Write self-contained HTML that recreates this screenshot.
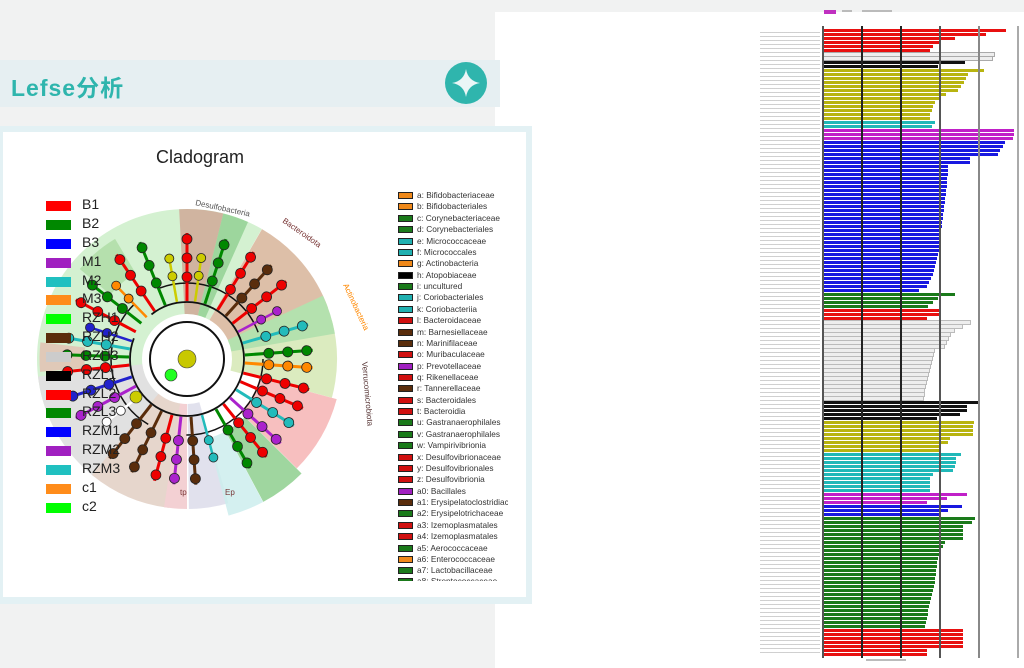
<!DOCTYPE html>
<html><head><meta charset="utf-8"><style>
*{margin:0;padding:0;box-sizing:border-box}
body{width:1024px;height:668px;overflow:hidden;position:relative;background:#f1f2f2;font-family:"Liberation Sans","Noto Sans CJK SC",sans-serif}
.whiteR{position:absolute;left:495px;top:12px;width:529px;height:656px;background:#fff}
.band{position:absolute;left:0;top:60px;width:500px;height:47px;background:#e6eff2}
.title{position:absolute;left:11px;top:69px;font-size:23px;font-weight:bold;color:#2fb5ad;letter-spacing:1px}
.panel{position:absolute;left:0;top:126px;width:532px;height:478px;background:#e3f1f4}
.inner{position:absolute;left:3px;top:132px;width:523px;height:465px;background:#fff}
.leg{position:absolute;left:46px;font-size:14px;color:#222}
.leg i{position:absolute;left:0;top:3px;width:25px;height:10px}
.leg span{position:absolute;left:36px;top:-2px;white-space:nowrap}
.rl{position:absolute;left:398px;width:110px;height:11px;font-size:8.3px;color:#333;white-space:nowrap;overflow:hidden}
.rl i{display:inline-block;width:15px;height:7px;border:1px solid #222;vertical-align:middle;margin-right:4px}
#bars{position:absolute;left:823px;top:29px}
#bars i{display:block;height:3px;margin-bottom:1px}
.g{position:absolute;top:26px;height:632px;width:1.5px}
.lbl{position:absolute;left:760px;top:30px;width:60px;height:626px;background:repeating-linear-gradient(#fff 0 2px,#bbb 2px 3px,#fff 3px 4px);opacity:.7}
</style></head><body>
<div class="whiteR"></div>
<div class="band"></div>
<div class="title">Lefse分析</div>
<svg style="position:absolute;left:444px;top:61px" width="44" height="44" viewBox="0 0 44 44"><ellipse cx="22" cy="22" rx="21" ry="21" fill="#2fb5ad"/><path d="M22 8 Q24 20 36 22 Q24 24 22 36 Q20 24 8 22 Q20 20 22 8Z" fill="#eaf6f6"/></svg>
<div class="panel"></div><div class="inner"></div>
<div style="position:absolute;left:156px;top:147px;font-size:18px;color:#222">Cladogram</div>

<svg style="position:absolute;left:0;top:0" width="530" height="600">
<defs>
<g id="L"><line x1="58" x2="126" y1="0" y2="0" stroke="currentColor" stroke-width="3"/><g fill="currentColor" stroke="#222" stroke-width=".8"><circle cx="82" r="5"/><circle cx="101" r="5"/><circle cx="120" r="5"/></g></g>
<g id="S"><line x1="58" x2="106" y1="0" y2="0" stroke="currentColor" stroke-width="2.5"/><g fill="currentColor" stroke="#222" stroke-width=".8"><circle cx="84" r="4.5"/><circle cx="102" r="4.5"/></g></g>
</defs>
<g transform="translate(187,359)" fill="none">
<g stroke-width="105" opacity=".85">
<circle r="97.5" stroke="#cdefc9" stroke-dasharray="238 1000" transform="rotate(160)"/>
<circle r="97.5" stroke="#dcdcdc" stroke-dasharray="77 1000" transform="rotate(128)"/>
<circle r="97.5" stroke="#e2cfc4" stroke-dasharray="55 1000" transform="rotate(97)"/>
<circle r="97.5" stroke="#f2c8cc" stroke-dasharray="15 1000" transform="rotate(90)"/>
<circle r="97.5" stroke="#dcdcea" stroke-dasharray="26 1000" transform="rotate(74)"/>
<circle r="97.5" stroke="#d8b49a" stroke-dasharray="68 1000" transform="rotate(300)"/>
<circle r="97.5" stroke="#c8a890" stroke-dasharray="29 1000" transform="rotate(267)"/>
<circle r="97.5" stroke="#8ccf8c" stroke-dasharray="17 1000" transform="rotate(284)"/>
<circle r="97.5" stroke="#d5e8b5" stroke-dasharray="51 1000" transform="rotate(345)"/>
<circle r="97.5" stroke="#a8dca0" stroke-dasharray="26 1000" transform="rotate(335)"/>
</g>
<g stroke-width="80" opacity=".85">
<circle r="115" stroke="#f6b5b5" stroke-dasharray="60 1000" transform="rotate(15)"/>
<circle r="122" stroke="#8fd08f" stroke-dasharray="36 1000" transform="rotate(45)"/>
<circle r="122" stroke="#cdeeee" stroke-dasharray="28 1000" transform="rotate(62)"/>
</g>
<circle r="120" stroke="#b5e0ad" stroke-width="40" stroke-dasharray="40 1000" transform="rotate(220)"/>
<circle r="125" stroke="#e0c9b8" stroke-width="45" stroke-dasharray="25 1000" transform="rotate(175)"/>
<circle r="42" fill="#fff"/>
<circle r="37" stroke="#111" stroke-width="2"/>
<circle r="57" stroke="#111" stroke-width="1.8" stroke-dasharray="200 30"/>
<circle r="76" stroke="#111" stroke-width="1.5" stroke-dasharray="120 40 140 30"/>
<use href="#L" transform="rotate(174)" style="color:#e00"/>
<use href="#L" transform="rotate(182)" style="color:#080"/>
<use href="#L" transform="rotate(190)" style="color:#2bb"/>
<use href="#S" transform="rotate(198)" style="color:#22c"/>
<use href="#L" transform="rotate(208)" style="color:#e00"/>
<use href="#L" transform="rotate(218)" style="color:#080"/>
<use href="#S" transform="rotate(226)" style="color:#f80"/>
<use href="#L" transform="rotate(236)" style="color:#e00"/>
<use href="#L" transform="rotate(248)" style="color:#080"/>
<use href="#S" transform="rotate(260)" style="color:#cc0"/>
<use href="#L" transform="rotate(270)" style="color:#e00"/>
<use href="#S" transform="rotate(278)" style="color:#cc0"/>
<use href="#L" transform="rotate(288)" style="color:#080"/>
<use href="#L" transform="rotate(302)" style="color:#e00"/>
<use href="#L" transform="rotate(312)" style="color:#5a2d0c"/>
<use href="#L" transform="rotate(322)" style="color:#e00"/>
<use href="#S" transform="rotate(332)" style="color:#a2c"/>
<use href="#L" transform="rotate(344)" style="color:#2bb"/>
<use href="#L" transform="rotate(356)" style="color:#080"/>
<use href="#L" transform="rotate(4)" style="color:#f80"/>
<use href="#L" transform="rotate(14)" style="color:#e00"/>
<use href="#L" transform="rotate(23)" style="color:#e00"/>
<use href="#L" transform="rotate(32)" style="color:#2bb"/>
<use href="#L" transform="rotate(42)" style="color:#a2c"/>
<use href="#L" transform="rotate(51)" style="color:#e00"/>
<use href="#L" transform="rotate(60)" style="color:#080"/>
<use href="#S" transform="rotate(75)" style="color:#2bb"/>
<use href="#L" transform="rotate(86)" style="color:#5a2d0c"/>
<use href="#L" transform="rotate(96)" style="color:#a2c"/>
<use href="#L" transform="rotate(105)" style="color:#e00"/>
<use href="#L" transform="rotate(116)" style="color:#5a2d0c"/>
<use href="#L" transform="rotate(128)" style="color:#5a2d0c"/>
<use href="#S" transform="rotate(142)" style="color:#fff"/>
<use href="#L" transform="rotate(152)" style="color:#a2c"/>
<use href="#L" transform="rotate(162)" style="color:#22c"/>
<circle r="9" cx="0" cy="0" fill="#c8c800" stroke="#444" stroke-width=".6"/>
<circle r="6" cx="-16" cy="16" fill="#2f2" stroke="#333" stroke-width=".6"/>
<circle r="6" cx="-51" cy="38" fill="#cc0" stroke="#333" stroke-width=".6"/>
</g>
<g font-size="8" fill="#555">
<text x="195" y="205" transform="rotate(12 195 205)">Desulfobacteria</text>
<text x="282" y="222" transform="rotate(35 282 222)" fill="#733">Bacteroidota</text>
<text x="343" y="285" transform="rotate(65 343 285)" fill="#f80">Actinobacteria</text>
<text x="362" y="362" transform="rotate(85 362 362)" fill="#533">Verrucomicrobiota</text>
<text x="180" y="495" fill="#733">tp</text><text x="225" y="495" fill="#733">Ep</text>
</g>
</svg>

<div class="leg" style="top:198px"><i style="background:#f00"></i><span>B1</span></div>
<div class="leg" style="top:217px"><i style="background:#080"></i><span>B2</span></div>
<div class="leg" style="top:236px"><i style="background:#00f"></i><span>B3</span></div>
<div class="leg" style="top:255px"><i style="background:#a020c0"></i><span>M1</span></div>
<div class="leg" style="top:274px"><i style="background:#20c0c0"></i><span>M2</span></div>
<div class="leg" style="top:292px"><i style="background:#ff8c1a"></i><span>M3</span></div>
<div class="leg" style="top:311px"><i style="background:#0f0"></i><span>RZH1</span></div>
<div class="leg" style="top:330px"><i style="background:#5a2d0c"></i><span>RZH2</span></div>
<div class="leg" style="top:349px"><i style="background:#ccc"></i><span>RZH3</span></div>
<div class="leg" style="top:368px"><i style="background:#000"></i><span>RZL1</span></div>
<div class="leg" style="top:387px"><i style="background:#f00"></i><span>RZL2</span></div>
<div class="leg" style="top:405px"><i style="background:#080"></i><span>RZL3</span></div>
<div class="leg" style="top:424px"><i style="background:#00f"></i><span>RZM1</span></div>
<div class="leg" style="top:443px"><i style="background:#a020c0"></i><span>RZM2</span></div>
<div class="leg" style="top:462px"><i style="background:#20c0c0"></i><span>RZM3</span></div>
<div class="leg" style="top:481px"><i style="background:#ff8c1a"></i><span>c1</span></div>
<div class="leg" style="top:500px"><i style="background:#0f0"></i><span>c2</span></div>

<div class="rl" style="top:190px"><i style="background:#f0891a"></i>a: Bifidobacteriaceae</div>
<div class="rl" style="top:201px"><i style="background:#f0891a"></i>b: Bifidobacteriales</div>
<div class="rl" style="top:213px"><i style="background:#1a7a1a"></i>c: Corynebacteriaceae</div>
<div class="rl" style="top:224px"><i style="background:#1a7a1a"></i>d: Corynebacteriales</div>
<div class="rl" style="top:236px"><i style="background:#20b0b0"></i>e: Micrococcaceae</div>
<div class="rl" style="top:247px"><i style="background:#20b0b0"></i>f: Micrococcales</div>
<div class="rl" style="top:258px"><i style="background:#f0891a"></i>g: Actinobacteria</div>
<div class="rl" style="top:270px"><i style="background:#000"></i>h: Atopobiaceae</div>
<div class="rl" style="top:281px"><i style="background:#1a7a1a"></i>i: uncultured</div>
<div class="rl" style="top:292px"><i style="background:#20b0b0"></i>j: Coriobacteriales</div>
<div class="rl" style="top:304px"><i style="background:#20b0b0"></i>k: Coriobacteriia</div>
<div class="rl" style="top:315px"><i style="background:#d01010"></i>l: Bacteroidaceae</div>
<div class="rl" style="top:327px"><i style="background:#5a2d0c"></i>m: Barnesiellaceae</div>
<div class="rl" style="top:338px"><i style="background:#5a2d0c"></i>n: Marinifilaceae</div>
<div class="rl" style="top:349px"><i style="background:#d01010"></i>o: Muribaculaceae</div>
<div class="rl" style="top:361px"><i style="background:#a020c0"></i>p: Prevotellaceae</div>
<div class="rl" style="top:372px"><i style="background:#d01010"></i>q: Rikenellaceae</div>
<div class="rl" style="top:383px"><i style="background:#5a2d0c"></i>r: Tannerellaceae</div>
<div class="rl" style="top:395px"><i style="background:#d01010"></i>s: Bacteroidales</div>
<div class="rl" style="top:406px"><i style="background:#d01010"></i>t: Bacteroidia</div>
<div class="rl" style="top:417px"><i style="background:#1a7a1a"></i>u: Gastranaerophilales</div>
<div class="rl" style="top:429px"><i style="background:#1a7a1a"></i>v: Gastranaerophilales</div>
<div class="rl" style="top:440px"><i style="background:#1a7a1a"></i>w: Vampirivibrionia</div>
<div class="rl" style="top:452px"><i style="background:#d01010"></i>x: Desulfovibrionaceae</div>
<div class="rl" style="top:463px"><i style="background:#d01010"></i>y: Desulfovibrionales</div>
<div class="rl" style="top:474px"><i style="background:#d01010"></i>z: Desulfovibrionia</div>
<div class="rl" style="top:486px"><i style="background:#a020c0"></i>a0: Bacillales</div>
<div class="rl" style="top:497px"><i style="background:#5a2d0c"></i>a1: Erysipelatoclostridiaceae</div>
<div class="rl" style="top:508px"><i style="background:#1a7a1a"></i>a2: Erysipelotrichaceae</div>
<div class="rl" style="top:520px"><i style="background:#d01010"></i>a3: Izemoplasmatales</div>
<div class="rl" style="top:531px"><i style="background:#d01010"></i>a4: Izemoplasmatales</div>
<div class="rl" style="top:543px"><i style="background:#1a7a1a"></i>a5: Aerococcaceae</div>
<div class="rl" style="top:554px"><i style="background:#f0891a"></i>a6: Enterococcaceae</div>
<div class="rl" style="top:565px"><i style="background:#1a7a1a"></i>a7: Lactobacillaceae</div>
<div class="rl" style="top:576px;height:5px"><i style="background:#1a7a1a"></i>a8: Streptococcaceae</div>

<div style="position:absolute;left:824px;top:10px;width:12px;height:4px;background:#c030c0"></div>
<div style="position:absolute;left:842px;top:10px;width:10px;height:2px;background:#bbb"></div>
<div style="position:absolute;left:862px;top:10px;width:30px;height:2px;background:#bbb"></div>
<div class="lbl"></div>
<div id="bars">
<i style="width:183px;background:#e81010"></i><i style="width:163px;background:#e81010"></i><i style="width:132px;background:#e81010"></i><i style="width:116px;background:#e81010"></i><i style="width:110px;background:#e81010"></i><i style="width:107px;background:#e81010"></i>
<i style="width:171px;background:#eee;outline:1px solid #aaa"></i><i style="width:169px;background:#eee;outline:1px solid #aaa"></i>
<i style="width:142px;background:#111"></i><i style="width:115px;background:#111"></i>
<i style="width:161px;background:#b8b410"></i><i style="width:145px;background:#b8b410"></i><i style="width:143px;background:#b8b410"></i><i style="width:141px;background:#b8b410"></i><i style="width:138px;background:#b8b410"></i><i style="width:135px;background:#b8b410"></i><i style="width:123px;background:#b8b410"></i><i style="width:116px;background:#b8b410"></i><i style="width:112px;background:#b8b410"></i><i style="width:110px;background:#b8b410"></i><i style="width:109px;background:#b8b410"></i><i style="width:107px;background:#b8b410"></i><i style="width:107px;background:#b8b410"></i>
<i style="width:112px;background:#20b8b8"></i><i style="width:109px;background:#20b8b8"></i>
<i style="width:191px;background:#c020c8"></i><i style="width:191px;background:#c020c8"></i><i style="width:190px;background:#c020c8"></i>
<i style="width:182px;background:#1818e0"></i><i style="width:180px;background:#1818e0"></i><i style="width:177px;background:#1818e0"></i><i style="width:175px;background:#1818e0"></i><i style="width:147px;background:#1818e0"></i><i style="width:147px;background:#1818e0"></i><i style="width:125px;background:#1818e0"></i><i style="width:125px;background:#1818e0"></i><i style="width:125px;background:#1818e0"></i><i style="width:124px;background:#1818e0"></i><i style="width:124px;background:#1818e0"></i><i style="width:124px;background:#1818e0"></i><i style="width:123px;background:#1818e0"></i><i style="width:123px;background:#1818e0"></i><i style="width:122px;background:#1818e0"></i><i style="width:122px;background:#1818e0"></i><i style="width:121px;background:#1818e0"></i><i style="width:121px;background:#1818e0"></i><i style="width:120px;background:#1818e0"></i><i style="width:120px;background:#1818e0"></i><i style="width:119px;background:#1818e0"></i><i style="width:119px;background:#1818e0"></i><i style="width:118px;background:#1818e0"></i><i style="width:118px;background:#1818e0"></i><i style="width:117px;background:#1818e0"></i><i style="width:117px;background:#1818e0"></i><i style="width:116px;background:#1818e0"></i><i style="width:116px;background:#1818e0"></i><i style="width:115px;background:#1818e0"></i><i style="width:114px;background:#1818e0"></i><i style="width:113px;background:#1818e0"></i><i style="width:112px;background:#1818e0"></i><i style="width:111px;background:#1818e0"></i><i style="width:110px;background:#1818e0"></i><i style="width:108px;background:#1818e0"></i><i style="width:106px;background:#1818e0"></i><i style="width:104px;background:#1818e0"></i><i style="width:96px;background:#1818e0"></i>
<i style="width:132px;background:#1a7a1a"></i><i style="width:115px;background:#1a7a1a"></i><i style="width:110px;background:#1a7a1a"></i><i style="width:105px;background:#1a7a1a"></i>
<i style="width:116px;background:#e81010"></i><i style="width:116px;background:#e81010"></i><i style="width:104px;background:#e81010"></i>
<i style="width:147px;background:#eee;outline:1px solid #bbb"></i><i style="width:139px;background:#eee;outline:1px solid #bbb"></i><i style="width:131px;background:#eee;outline:1px solid #bbb"></i><i style="width:127px;background:#eee;outline:1px solid #bbb"></i><i style="width:125px;background:#eee;outline:1px solid #bbb"></i><i style="width:123px;background:#eee;outline:1px solid #bbb"></i><i style="width:121px;background:#eee;outline:1px solid #bbb"></i><i style="width:111px;background:#eee;outline:1px solid #bbb"></i><i style="width:110px;background:#eee;outline:1px solid #bbb"></i><i style="width:109px;background:#eee;outline:1px solid #bbb"></i><i style="width:108px;background:#eee;outline:1px solid #bbb"></i><i style="width:107px;background:#eee;outline:1px solid #bbb"></i><i style="width:106px;background:#eee;outline:1px solid #bbb"></i><i style="width:105px;background:#eee;outline:1px solid #bbb"></i><i style="width:104px;background:#eee;outline:1px solid #bbb"></i><i style="width:103px;background:#eee;outline:1px solid #bbb"></i><i style="width:102px;background:#eee;outline:1px solid #bbb"></i><i style="width:101px;background:#eee;outline:1px solid #bbb"></i><i style="width:101px;background:#eee;outline:1px solid #bbb"></i><i style="width:100px;background:#eee;outline:1px solid #bbb"></i>
<i style="width:156px;background:#111"></i><i style="width:144px;background:#111"></i><i style="width:144px;background:#111"></i><i style="width:137px;background:#111"></i><i style="width:114px;background:#111"></i>
<i style="width:151px;background:#b8b410"></i><i style="width:150px;background:#b8b410"></i><i style="width:150px;background:#b8b410"></i><i style="width:150px;background:#b8b410"></i><i style="width:127px;background:#b8b410"></i><i style="width:125px;background:#b8b410"></i><i style="width:117px;background:#b8b410"></i><i style="width:117px;background:#b8b410"></i>
<i style="width:138px;background:#20b8b8"></i><i style="width:133px;background:#20b8b8"></i><i style="width:133px;background:#20b8b8"></i><i style="width:132px;background:#20b8b8"></i><i style="width:130px;background:#20b8b8"></i><i style="width:110px;background:#20b8b8"></i><i style="width:107px;background:#20b8b8"></i><i style="width:107px;background:#20b8b8"></i><i style="width:107px;background:#20b8b8"></i><i style="width:107px;background:#20b8b8"></i>
<i style="width:144px;background:#c020c8"></i><i style="width:124px;background:#c020c8"></i><i style="width:104px;background:#c020c8"></i>
<i style="width:139px;background:#1818e0"></i><i style="width:125px;background:#1818e0"></i><i style="width:118px;background:#1818e0"></i>
<i style="width:152px;background:#1a7a1a"></i><i style="width:149px;background:#1a7a1a"></i><i style="width:140px;background:#1a7a1a"></i><i style="width:140px;background:#1a7a1a"></i><i style="width:140px;background:#1a7a1a"></i><i style="width:140px;background:#1a7a1a"></i><i style="width:122px;background:#1a7a1a"></i><i style="width:120px;background:#1a7a1a"></i><i style="width:118px;background:#1a7a1a"></i><i style="width:117px;background:#1a7a1a"></i><i style="width:115px;background:#1a7a1a"></i><i style="width:114px;background:#1a7a1a"></i><i style="width:114px;background:#1a7a1a"></i><i style="width:113px;background:#1a7a1a"></i><i style="width:113px;background:#1a7a1a"></i><i style="width:112px;background:#1a7a1a"></i><i style="width:112px;background:#1a7a1a"></i><i style="width:111px;background:#1a7a1a"></i><i style="width:110px;background:#1a7a1a"></i><i style="width:109px;background:#1a7a1a"></i><i style="width:108px;background:#1a7a1a"></i><i style="width:107px;background:#1a7a1a"></i><i style="width:106px;background:#1a7a1a"></i><i style="width:105px;background:#1a7a1a"></i><i style="width:105px;background:#1a7a1a"></i><i style="width:104px;background:#1a7a1a"></i><i style="width:103px;background:#1a7a1a"></i><i style="width:102px;background:#1a7a1a"></i>
<i style="width:140px;background:#e81010"></i><i style="width:140px;background:#e81010"></i><i style="width:140px;background:#e81010"></i><i style="width:140px;background:#e81010"></i><i style="width:140px;background:#e81010"></i><i style="width:104px;background:#e81010"></i><i style="width:104px;background:#e81010"></i>
</div>
<div class="g" style="left:822px;background:#555"></div>
<div class="g" style="left:861px;background:#222"></div>
<div class="g" style="left:900px;background:#222"></div>
<div class="g" style="left:939px;background:#555"></div>
<div class="g" style="left:978px;background:#888"></div>
<div class="g" style="left:1017px;background:#aaa"></div>
<div style="position:absolute;left:866px;top:659px;width:40px;height:2px;background:#bbb"></div>
</body></html>
